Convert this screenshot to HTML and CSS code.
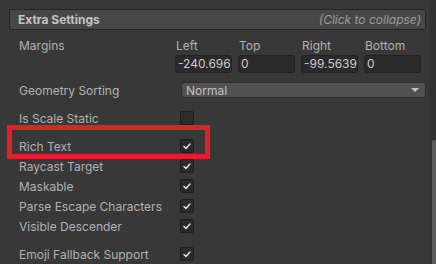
FILE: index.html
```html
<!DOCTYPE html>
<html>
<head>
<meta charset="utf-8">
<link rel="stylesheet" href="styles.css">
</head>
<body>
<div class="window">
  <div class="content">
    <div class="header">
      <span class="title">Extra Settings</span>
      <span class="hint">(Click to collapse)</span>
    </div>
    <div class="margins">
      <div class="mlabel">Margins</div>
      <div class="mgrid">
        <div class="mcol"><div class="sub">Left</div><div class="field">-240.696</div></div>
        <div class="mcol"><div class="sub">Top</div><div class="field">0</div></div>
        <div class="mcol"><div class="sub">Right</div><div class="field">-99.5639</div></div>
        <div class="mcol"><div class="sub">Bottom</div><div class="field">0</div></div>
      </div>
    </div>
    <div class="row gap">
      <div class="label">Geometry Sorting</div>
      <div class="dropdown"><span>Normal</span><span class="arrow"></span></div>
    </div>
    <div class="row gap">
      <div class="label">Is Scale Static</div>
      <div class="check"></div>
    </div>
    <div class="row gap highlight">
      <div class="label">Rich Text</div>
      <div class="check"><svg viewBox="0 0 14 14" width="14" height="14"><polyline points="4,7.5 6,9.5 10,5" fill="none" stroke="#e6e6e6" stroke-width="1.4" stroke-linecap="round" stroke-linejoin="round"/></svg></div>
      <div class="redbox"></div>
    </div>
    <div class="row">
      <div class="label">Raycast Target</div>
      <div class="check"><svg viewBox="0 0 14 14" width="14" height="14"><polyline points="4,7.5 6,9.5 10,5" fill="none" stroke="#e6e6e6" stroke-width="1.4" stroke-linecap="round" stroke-linejoin="round"/></svg></div>
    </div>
    <div class="row">
      <div class="label">Maskable</div>
      <div class="check"><svg viewBox="0 0 14 14" width="14" height="14"><polyline points="4,7.5 6,9.5 10,5" fill="none" stroke="#e6e6e6" stroke-width="1.4" stroke-linecap="round" stroke-linejoin="round"/></svg></div>
    </div>
    <div class="row">
      <div class="label">Parse Escape Characters</div>
      <div class="check"><svg viewBox="0 0 14 14" width="14" height="14"><polyline points="4,7.5 6,9.5 10,5" fill="none" stroke="#e6e6e6" stroke-width="1.4" stroke-linecap="round" stroke-linejoin="round"/></svg></div>
    </div>
    <div class="row">
      <div class="label">Visible Descender</div>
      <div class="check"><svg viewBox="0 0 14 14" width="14" height="14"><polyline points="4,7.5 6,9.5 10,5" fill="none" stroke="#e6e6e6" stroke-width="1.4" stroke-linecap="round" stroke-linejoin="round"/></svg></div>
    </div>
    <div class="row gap">
      <div class="label">Emoji Fallback Support</div>
      <div class="check"><svg viewBox="0 0 14 14" width="14" height="14"><polyline points="4,7.5 6,9.5 10,5" fill="none" stroke="#e6e6e6" stroke-width="1.4" stroke-linecap="round" stroke-linejoin="round"/></svg></div>
    </div>
  </div>
  <div class="scrollbar"><div class="thumb"></div></div>
</div>
</body>
</html>
```

FILE: styles.css
```css
html, body {
  margin: 0;
  padding: 0;
  background: #383838;
  width: 436px;
  height: 264px;
  overflow: hidden;
}
body {
  font-family: Inter, "Noto Sans", sans-serif;
  font-size: 12px;
  color: #b2b2b2;
}
.window {
  display: flex;
  height: 264px;
}
.content {
  flex: 1;
  padding: 9px 3px 0 9px;
  min-width: 0;
}
.scrollbar {
  width: 7px;
  background: #323232;
  display: flex;
  flex-direction: column;
  align-items: flex-end;
}
.thumb {
  margin-top: 140px;
  width: 4px;
  flex: 1;
  background: #5a5a5a;
  border-radius: 2px 0 0 0;
}
.header {
  height: 19px;
  border: 1px solid #262626;
  background: #474747;
  border-radius: 2px;
  display: flex;
  align-items: center;
  justify-content: space-between;
  padding: 0 4px 0 8px;
}
.title {
  font-weight: 700;
  color: #c4c4c4;
  font-size: 12px;
}
.hint {
  font-style: italic;
  color: #9c9c9c;
}
.margins {
  display: flex;
  margin-top: 8px;
  padding-left: 10px;
}
.mlabel {
  width: 156px;
  flex: none;
  height: 16px;
  line-height: 16px;
}
.mgrid {
  display: grid;
  grid-template-columns: repeat(4, 57px);
  column-gap: 6px;
}
.sub {
  height: 16px;
  line-height: 16px;
  padding-left: 1px;
  margin-bottom: 1px;
}
.field {
  height: 16px;
  line-height: 16px;
  border: 1px solid #222222;
  background: #2a2a2a;
  border-radius: 3px;
  padding: 0 0 0 2px;
  color: #cccccc;
  white-space: nowrap;
  overflow: hidden;
}
.row {
  display: flex;
  align-items: center;
  height: 20px;
  padding-left: 10px;
  position: relative;
}
.row.gap {
  margin-top: 8px;
}
.margins + .row.gap {
  margin-top: 7px;
}
.label {
  width: 161px;
  flex: none;
  white-space: nowrap;
}
.dropdown {
  flex: 1;
  margin-left: 1px;
  height: 14px;
  border: 1px solid #2e2e2e;
  background: #515151;
  border-radius: 3px;
  display: flex;
  align-items: center;
  justify-content: space-between;
  padding: 0 6px 0 4px;
  color: #c0c0c0;
}
.arrow {
  width: 0;
  height: 0;
  border-left: 4px solid transparent;
  border-right: 4px solid transparent;
  border-top: 4px solid #c4c4c4;
}
.check {
  width: 12px;
  height: 12px;
  border: 1px solid #1e1e1e;
  background: #2b2b2b;
  border-radius: 2px;
  display: flex;
  align-items: center;
  justify-content: center;
  overflow: hidden;
}
.check svg {
  flex: none;
}
.redbox {
  position: absolute;
  left: -2px;
  top: -11px;
  width: 193px;
  height: 24px;
  border: 5px solid #e3202a;
  pointer-events: none;
}
```
